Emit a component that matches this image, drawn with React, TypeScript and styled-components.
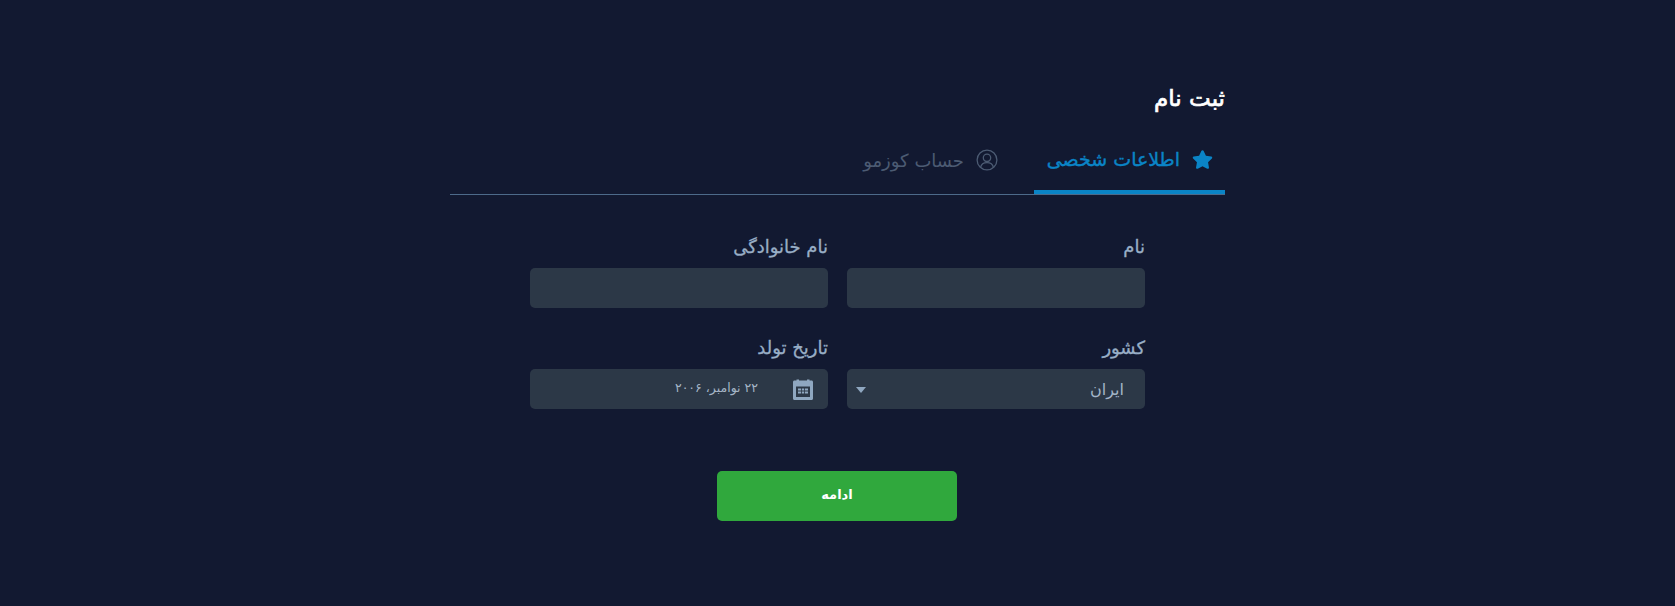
import React from "react";
import styled, { createGlobalStyle } from "styled-components";
import { FaStar } from "react-icons/fa";

const GlobalStyle = createGlobalStyle`
    html, body {
        margin: 0;
        padding: 0;
        background: #121931;
    }
`

const Page = styled.div`
    width: 100%;
    height: 606px;
    box-sizing: border-box;
    padding-top: 80px;

    display: flex;
    flex-direction: column;
    align-items: center;

    background: #121931;
    font-family: "DejaVu Sans", "Noto Sans", sans-serif;
`

const Wrapper = styled.div`
    width: 775px;
`

const Title = styled.h1`
    margin: 0;
    height: 36px;
    line-height: 36px;

    font-size: 23px;
    font-weight: 400;
    -webkit-text-stroke: 0.7px #ffffff;
    color: #ffffff;
`

const Tabs = styled.div`
    height: 66px;
    margin-top: 12px;

    display: flex;

    border-bottom: 1px solid #4d6a8a;
`

const Tab = styled.div<{ $active?: boolean }>`
    height: 100%;
    box-sizing: border-box;
    padding: 0 12px ${props => props.$active ? "0" : "2px"};
    width: ${props => props.$active ? "191px" : "auto"};
    margin-right: ${props => props.$active ? "0" : "24px"};

    display: flex;
    align-items: center;
    gap: 12px;

    white-space: nowrap;
    font-size: ${props => props.$active ? "19px" : "18px"};
    font-weight: 400;
    -webkit-text-stroke: ${props => props.$active ? "0.4px #0a84c6" : "0"};
    color: ${props => props.$active ? "#0a84c6" : "#4c5b73"};
    border-bottom: ${props => props.$active ? "4px solid #0a84c6" : "none"};
    margin-bottom: -1px;
`

const Form = styled.div`
    width: 615px;
    margin: 33px auto 0;

    display: grid;
    grid-template-columns: 298px 298px;
    column-gap: 19px;
    row-gap: 21px;
`

const Field = styled.div`
    display: flex;
    flex-direction: column;
`

const Label = styled.label`
    height: 40px;
    line-height: 38px;

    font-size: 18px;
    -webkit-text-stroke: 0.3px #98aec6;
    color: #98aec6;
`

const TextInput = styled.input`
    width: 100%;
    height: 40px;
    box-sizing: border-box;

    border: none;
    border-radius: 5px;
    outline: none;
    background: #2c3847;
`

const FakeSelect = styled.div`
    height: 40px;
    box-sizing: border-box;
    padding: 0 21px 0 9px;

    display: flex;
    align-items: center;
    justify-content: space-between;

    border-radius: 5px;
    background: #2c3847;

    font-size: 16px;
    color: #a3b5c8;
`

const Caret = styled.span`
    width: 0;
    height: 0;
    margin-top: 2px;

    border-left: 5px solid transparent;
    border-right: 5px solid transparent;
    border-top: 6px solid #8fa7c0;
`

const DateBox = styled.div`
    height: 40px;
    box-sizing: border-box;
    padding: 0 15px;

    display: flex;
    align-items: center;
    gap: 35px;

    border-radius: 5px;
    background: #2c3847;

    font-size: 12.5px;
    color: #a5b5c6;
`

const DateText = styled.span`
    margin-bottom: 4px;
`

const Actions = styled.div`
    margin-top: 62px;
    padding-right: 1px;

    display: flex;
    justify-content: center;
`

const Submit = styled.button`
    width: 240px;
    height: 50px;
    padding: 0 0 4px;

    border: none;
    border-radius: 5px;
    background: #30a83d;

    font-family: inherit;
    font-size: 13px;
    font-weight: 700;
    color: #ffffff;
`

const CalendarIcon = () => (
    <svg width="20" height="21" viewBox="0 0 20 21">
        <path fill="#8fa7c0" d="M1.5 1.5H3.5V0.5H6V1.5H14V0.5H16.5V1.5H18.5C19.4 1.5 20 2.1 20 3V19.5C20 20.4 19.4 21 18.5 21H1.5C0.6 21 0 20.4 0 19.5V3C0 2.1 0.6 1.5 1.5 1.5Z" />
        <rect x="3" y="7.5" width="14" height="10.5" fill="#2c3847" />
        <path fill="#8fa7c0" d="M5 9.5H8V11.5H5ZM8.8 9.5H11.2V11.5H8.8ZM12 9.5H15V11.5H12ZM5 12.5H8V14.5H5ZM8.8 12.5H11.2V14.5H8.8ZM12 12.5H15V14.5H12Z" />
    </svg>
)

const UserIcon = () => (
    <svg width="22" height="22" viewBox="0 0 22 22" fill="none" stroke="currentColor" strokeWidth="1.3">
        <circle cx="11" cy="11" r="9.9" />
        <circle cx="11" cy="8.8" r="3.7" />
        <path d="M4.6 18.4C5.2 15.2 7.6 13.6 11 13.6C14.4 13.6 16.8 15.2 17.4 18.4" />
    </svg>
)

const App = () => {
    return (
        <Page dir="rtl">
            <GlobalStyle />
            <Wrapper>
                <Title>ثبت نام</Title>
                <Tabs>
                    <Tab $active>
                        <FaStar size={21} />
                        اطلاعات شخصی
                    </Tab>
                    <Tab>
                        <UserIcon />
                        حساب کوزمو
                    </Tab>
                </Tabs>
                <Form>
                    <Field>
                        <Label>نام</Label>
                        <TextInput />
                    </Field>
                    <Field>
                        <Label>نام خانوادگی</Label>
                        <TextInput />
                    </Field>
                    <Field>
                        <Label>کشور</Label>
                        <FakeSelect>
                            ایران
                            <Caret />
                        </FakeSelect>
                    </Field>
                    <Field>
                        <Label>تاریخ تولد</Label>
                        <DateBox>
                            <CalendarIcon />
                            <DateText>۲۲ نوامبر، ۲۰۰۶</DateText>
                        </DateBox>
                    </Field>
                </Form>
                <Actions>
                    <Submit>ادامه</Submit>
                </Actions>
            </Wrapper>
        </Page>
    );
}

export default App;
